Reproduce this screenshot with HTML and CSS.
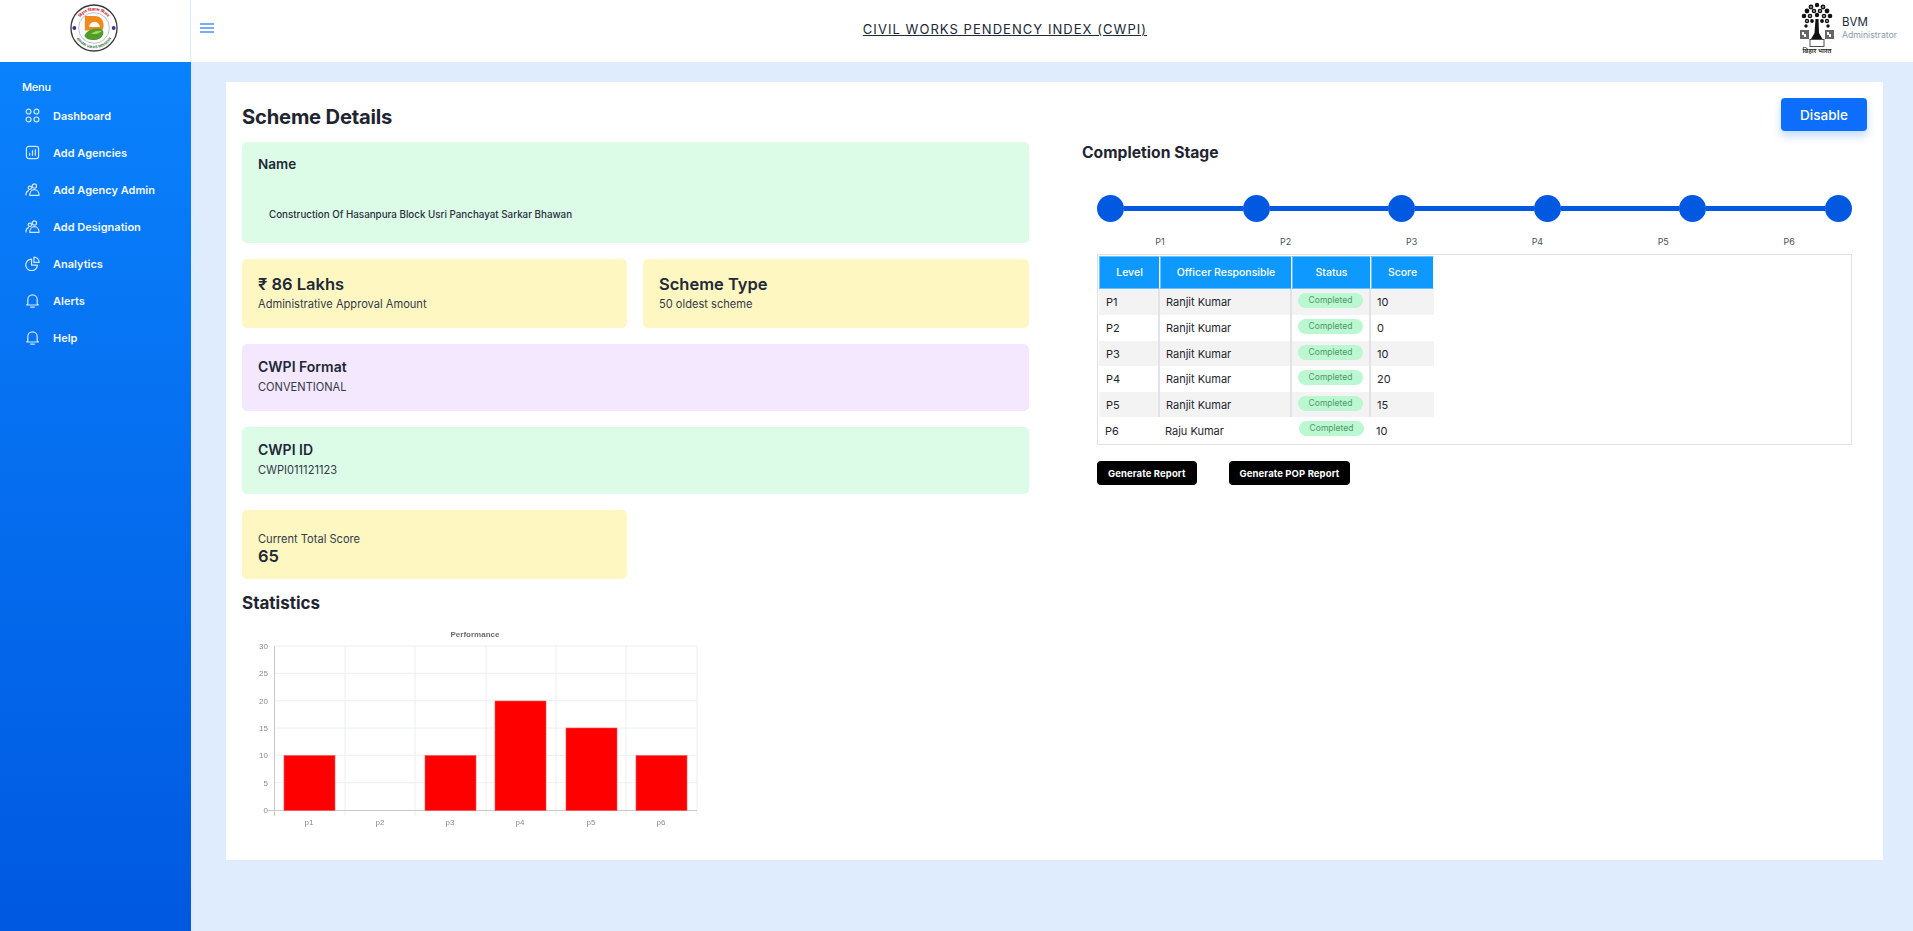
FILE: index.html
```html
<!DOCTYPE html>
<html lang="en">
<head>
<meta charset="utf-8">
<title>Scheme Details</title>
<link rel="stylesheet" href="styles.css">
</head>
<body>
<div class="app">
  <aside class="sidebar">
    <div class="brand">
      <svg class="logo" viewBox="0 0 50 50" width="48" height="48">
        <defs>
          <path id="arcTop" d="M7 25a18 18 0 0 1 36 0"/>
          <path id="arcBot" d="M3.800 25a21.200 21.200 0 0 0 42.400 0"/>
        </defs>
        <circle cx="25" cy="25" r="24" fill="#fff" stroke="#3a3a3a" stroke-width="1.400"/>
        <circle cx="25" cy="25" r="16" fill="#fff" stroke="#8d8bc9" stroke-width=".6"/>
        <text class="logo-top"><textPath href="#arcTop" startOffset="50%" text-anchor="middle">बिहार विकास मिशन</textPath></text>
        <text class="logo-bot"><textPath href="#arcBot" startOffset="50%" text-anchor="middle">BIHAR VIKAS MISSION</textPath></text>
        <circle cx="4.500" cy="25" r="2" fill="#3d2f92"/>
        <circle cx="45.500" cy="25" r="2" fill="#3d2f92"/>
        <path d="M15.500 12.500h10c7 0 9.500 5 9.500 10 0 2-.5 3.500-1.500 5H15.500z" fill="#f08a1d"/>
        <path d="M20 24a5.500 5.500 0 0 1 11 0z" fill="#fff"/>
        <path d="M15 33c2-5 8-8 15-7.500 4 .5 5.500 3 4.500 6-1 4-5 6-10 6-4.500 0-8-1-9.500-4.500z" fill="#4f9e2a"/>
        <path d="M22 31c3-2.500 7-3.500 11-3-2 2.500-7 4-11 3z" fill="#a6d468"/>
      </svg>
    </div>
    <nav class="nav">
      <div class="nav-label">Menu</div>
      <a class="nav-item"><svg class="nav-icon" viewBox="0 0 16 16"><circle cx="3.800" cy="3.800" r="2.600"/><circle cx="12.200" cy="3.800" r="2.600"/><circle cx="3.800" cy="12.200" r="2.600"/><circle cx="12.200" cy="12.200" r="2.600"/></svg>Dashboard</a>
      <a class="nav-item"><svg class="nav-icon" viewBox="0 0 16 16"><rect x="1.500" y="1.500" width="13" height="13" rx="2.500"/><path d="M5 11V9M8 11V6M11 11V5"/></svg>Add Agencies</a>
      <a class="nav-item"><svg class="nav-icon" viewBox="0 0 16 16"><circle cx="10" cy="4.200" r="2.300"/><circle cx="5.200" cy="6.200" r="1.800"/><path d="M5 14.200h10c0-3.500-2.200-6-5-6s-5 2.500-5 6zM1 13.800c0-2.500 1-4 2.600-4.600"/></svg>Add Agency Admin</a>
      <a class="nav-item"><svg class="nav-icon" viewBox="0 0 16 16"><circle cx="10" cy="4.200" r="2.300"/><circle cx="5.200" cy="6.200" r="1.800"/><path d="M5 14.200h10c0-3.500-2.200-6-5-6s-5 2.500-5 6zM1 13.800c0-2.500 1-4 2.600-4.600"/></svg>Add Designation</a>
      <a class="nav-item"><svg class="nav-icon" viewBox="0 0 16 16"><path d="M7 3.300a6.200 6.200 0 1 0 6.200 6.500H7z"/><path d="M9.500 1.200v5.600h5.600a5.600 5.600 0 0 0-5.600-5.600z"/></svg>Analytics</a>
      <a class="nav-item"><svg class="nav-icon" viewBox="0 0 16 16"><path d="M3 11.800V7a5 5 0 0 1 10 0v4.800l1.200 1H1.800z"/><path d="M6 15h4"/></svg>Alerts</a>
      <a class="nav-item"><svg class="nav-icon" viewBox="0 0 16 16"><path d="M3 11.800V7a5 5 0 0 1 10 0v4.800l1.200 1H1.800z"/><path d="M6 15h4"/></svg>Help</a>
    </nav>
  </aside>
  <div class="content">
    <header class="topbar">
      <svg class="burger" viewBox="0 0 14 10" width="14" height="10"><path d="M0 1h14M0 5h14M0 9h14"/></svg>
      <h1 class="page-title">CIVIL WORKS PENDENCY INDEX (CWPI)</h1>
      <div class="user">
        <svg class="emblem" viewBox="0 0 36 52" width="36" height="52">
          <g fill="#111">
            <circle cx="18" cy="3" r="2.200"/><circle cx="12" cy="5" r="2.400"/><circle cx="24" cy="5" r="2.400"/>
            <circle cx="8" cy="9" r="2.400"/><circle cx="15" cy="9" r="2.300"/><circle cx="21" cy="9" r="2.300"/><circle cx="28" cy="9" r="2.400"/>
            <circle cx="5" cy="14" r="2.300"/><circle cx="11" cy="14" r="2.300"/><circle cx="18" cy="13" r="2.200"/><circle cx="25" cy="14" r="2.300"/><circle cx="31" cy="14" r="2.300"/>
            <circle cx="8" cy="19" r="2.200"/><circle cx="13" cy="19" r="1.900"/><circle cx="23" cy="19" r="1.900"/><circle cx="28" cy="19" r="2.200"/>
            <circle cx="7" cy="24" r="1.700"/><circle cx="29" cy="24" r="1.700"/>
            <path d="M16.500 17h3l.5 14 3.500 6h-11.500l3.500-6z"/>
            <rect x="1" y="28" width="9" height="9" fill="#666"/><rect x="26" y="28" width="9" height="9" fill="#666"/>
          </g>
          <g fill="#fff">
            <circle cx="12" cy="5" r=".8"/><circle cx="24" cy="5" r=".8"/><circle cx="15" cy="9" r=".8"/><circle cx="21" cy="9" r=".8"/><circle cx="11" cy="14" r=".8"/><circle cx="25" cy="14" r=".8"/><circle cx="8" cy="19" r=".8"/><circle cx="28" cy="19" r=".8"/>
            <path d="M3 30h2v2h2v3H5v-2H3zM28 30h2v2h2v3h-2v-2h-2z"/>
            <rect x="11" y="37.500" width="14" height="7" stroke="#222" stroke-width=".8"/>
          </g>
          <text class="emblem-text" x="18" y="51" text-anchor="middle">बिहार भारत</text>
        </svg>
        <div class="user-text">
          <div class="user-name">BVM</div>
          <div class="user-role">Administrator</div>
        </div>
      </div>
    </header>
    <main class="main">
      <section class="card">
        <div class="col-left">
          <h2 class="h-page">Scheme Details</h2>
          <div class="tile tile-green tile-name">
            <h3 class="tile-h-sm">Name</h3>
            <p class="name-val">Construction Of Hasanpura Block Usri Panchayat Sarkar Bhawan</p>
          </div>
          <div class="tile-row">
            <div class="tile tile-yellow tile-half">
              <h3 class="tile-h">₹ 86 Lakhs</h3>
              <p class="tile-p">Administrative Approval Amount</p>
            </div>
            <div class="tile tile-yellow tile-half">
              <h3 class="tile-h">Scheme Type</h3>
              <p class="tile-p">50 oldest scheme</p>
            </div>
          </div>
          <div class="tile tile-purple">
            <h3 class="tile-h-md">CWPI Format</h3>
            <p class="tile-p tile-p-gap">CONVENTIONAL</p>
          </div>
          <div class="tile tile-green">
            <h3 class="tile-h-md">CWPI ID</h3>
            <p class="tile-p tile-p-gap">CWPI011121123</p>
          </div>
          <div class="tile tile-yellow tile-score">
            <p class="tile-p">Current Total Score</p>
            <h3 class="tile-h">65</h3>
          </div>
          <h2 class="h-sec stat-h">Statistics</h2>
          <svg class="chart" viewBox="0 0 480 220" width="480" height="220">
            <g class="grid">
              <path d="M44 27h423M44 54.300h423M44 81.700h423M44 109h423M44 136.300h423M44 163.700h423"/>
              <path d="M115 27v170M185 27v170M256 27v170M326 27v170M396 27v170M467 27v170"/>
            </g>
            <g class="axis"><path d="M44.500 27v170M38 191.500h429"/></g>
            <g class="bars">
              <rect x="54" y="136.500" width="51" height="55"/>
              <rect x="195" y="136.500" width="51" height="55"/>
              <rect x="265" y="82" width="51" height="109.500"/>
              <rect x="336" y="109" width="51" height="82.500"/>
              <rect x="406" y="136.500" width="51" height="55"/>
            </g>
            <text class="c-title" x="245" y="18" text-anchor="middle">Performance</text>
            <g class="c-y" text-anchor="end">
              <text x="38" y="30">30</text><text x="38" y="57">25</text><text x="38" y="85">20</text><text x="38" y="112">15</text><text x="38" y="139">10</text><text x="38" y="167">5</text><text x="38" y="194">0</text>
            </g>
            <g class="c-x" text-anchor="middle">
              <text x="79" y="206">p1</text><text x="150" y="206">p2</text><text x="220" y="206">p3</text><text x="290" y="206">p4</text><text x="361" y="206">p5</text><text x="431" y="206">p6</text>
            </g>
          </svg>
        </div>
        <div class="col-right">
          <div class="action-row"><button class="btn-primary">Disable</button></div>
          <h2 class="h-sec stage-h">Completion Stage</h2>
          <div class="stepper">
            <span class="dot"></span><span class="bar"></span><span class="dot"></span><span class="bar"></span><span class="dot"></span><span class="bar"></span><span class="dot"></span><span class="bar"></span><span class="dot"></span><span class="bar"></span><span class="dot"></span>
          </div>
          <div class="step-labels"><span>P1</span><span>P2</span><span>P3</span><span>P4</span><span>P5</span><span>P6</span></div>
          <div class="table-box">
            <table class="tbl">
              <thead><tr><th class="c1">Level</th><th class="c2">Officer Responsible</th><th class="c3">Status</th><th class="c4">Score</th></tr></thead>
              <tbody>
                <tr><td>P1</td><td>Ranjit Kumar</td><td><span class="pill">Completed</span></td><td>10</td></tr>
                <tr><td>P2</td><td>Ranjit Kumar</td><td><span class="pill">Completed</span></td><td>0</td></tr>
                <tr class="short"><td>P3</td><td>Ranjit Kumar</td><td><span class="pill">Completed</span></td><td>10</td></tr>
                <tr><td>P4</td><td>Ranjit Kumar</td><td><span class="pill">Completed</span></td><td>20</td></tr>
                <tr class="short"><td>P5</td><td>Ranjit Kumar</td><td><span class="pill">Completed</span></td><td>15</td></tr>
                <tr class="last"><td>P6</td><td>Raju Kumar</td><td><span class="pill">Completed</span></td><td>10</td></tr>
              </tbody>
            </table>
          </div>
          <div class="report-btns">
            <button class="btn-black">Generate Report</button>
            <button class="btn-black">Generate POP Report</button>
          </div>
        </div>
      </section>
    </main>
  </div>
</div>
</body>
</html>
```

FILE: styles.css
```css
* { box-sizing: border-box; }
html, body { margin: 0; height: 100%; }
body {
  font-family: "Inter", "Noto Sans", "Liberation Sans", sans-serif;
  color: #212837;
  background: #deecfe;
  overflow: hidden;
}
h1, h2, h3, p { margin: 0; }
.app { display: flex; height: 931px; }

.sidebar {
  width: 191px;
  flex: none;
  display: flex;
  flex-direction: column;
  background: linear-gradient(180deg, #0a84ff 0%, #0059e0 100%);
}
.brand {
  height: 62px;
  background: #fff;
  border-right: 1px solid #deecfe;
  display: flex;
  align-items: center;
  justify-content: center;
  padding: 0 2px 6px 0;
}
.logo-top { font: 700 4.200px "Noto Sans", sans-serif; fill: #c8242b; }
.logo-bot { font: 700 3.900px "Liberation Sans", sans-serif; fill: #1c6b2f; }
.nav { padding: 18px 0 0 22px; }
.nav-label { font-size: 11px; font-weight: 500; color: #fff; line-height: 14px; margin-bottom: 3px; letter-spacing: -.2px; }
.nav-item {
  display: flex;
  align-items: center;
  gap: 13px;
  height: 37px;
  padding-left: 3px;
  font-size: 11px;
  font-weight: 600;
  color: #f2f7ff;
}
.nav-icon {
  width: 15px;
  height: 15px;
  flex: none;
  fill: none;
  stroke: #d6e6ff;
  stroke-width: 1.300;
  stroke-linejoin: round;
  stroke-linecap: round;
}

.content { flex: 1; min-width: 0; display: flex; flex-direction: column; }
.topbar {
  height: 62px;
  background: #fff;
  display: flex;
  align-items: center;
  padding: 0 16px 6px 9px;
}
.burger { stroke: #4d90f5; stroke-width: 1.500; fill: none; flex: none; }
.page-title {
  flex: 1;
  text-align: center;
  font-size: 13px;
  font-weight: 400;
  letter-spacing: 1.050px;
  color: #212837;
  text-decoration: underline;
  padding: 2px 31px 0 28px;
}
.user { display: flex; align-items: center; gap: 7px; }
.emblem-text { font: 600 6.500px "Noto Sans", sans-serif; fill: #222; }
.user-name { font-size: 11.500px; line-height: 14px; color: #212837; }
.user-role { font-size: 8.700px; line-height: 12px; color: #8b97ad; }

.main { flex: 1; padding: 20px 30px 0 35px; }
.card {
  background: #fff;
  height: 778px;
  padding: 16px;
  display: grid;
  grid-template-columns: 787px 1fr;
  column-gap: 53px;
}
.h-page { font-size: 20.200px; font-weight: 700; line-height: 26px; height: 44px; padding-top: 6px; color: #1f2530; letter-spacing: -.2px; }
.h-sec { font-size: 16px; font-weight: 700; color: #1f2530; line-height: 20px; }

.tile { border-radius: 5px; padding: 14px 16px; margin-bottom: 16px; height: 67px; }
.tile-green { background: #dcfce7; }
.tile-yellow { background: #fef7c2; }
.tile-purple { background: #f3e8ff; }
.tile-name { height: 101px; padding-top: 13px; }
.tile-row { display: grid; grid-template-columns: 385px 386px; column-gap: 16px; }
.tile-half { height: 69px; }
.tile-score { width: 385px; height: 69px; padding-top: 20px; margin-bottom: 0; }
.tile-h-sm { font-size: 13.500px; font-weight: 600; line-height: 18px; }
.tile-h { font-size: 16.500px; font-weight: 600; line-height: 23px; }
.tile-h-md { font-size: 14px; font-weight: 600; line-height: 18px; }
.tile-p { font-size: 11.100px; line-height: 16px; color: #333a4a; }
.tile-p-gap { margin-top: 3px; }
.tile-score .tile-h { line-height: 19px; }
.tile-score .tile-p { padding-top: 1px; }
.name-val { font-size: 9.800px; font-weight: 500; margin: 35px 0 0 11px; line-height: 14px; color: #2a3040; }

.stat-h { margin-top: 14px; height: 26px; font-size: 17px; }
.chart { display: block; margin: 0 0 0 -12px; filter: blur(.35px); }
.grid path { stroke: #eceef1; stroke-width: 1; fill: none; }
.axis path { stroke: #c9c9c9; stroke-width: 1; fill: none; }
.bars rect { fill: #ff0000; stroke: #ff5050; stroke-width: .6; }
.c-title { font: 700 8px "Liberation Sans", sans-serif; fill: #6b6b6b; }
.c-y text, .c-x text { font: 8px "Liberation Sans", sans-serif; fill: #8a8a8a; }

.action-row { display: flex; justify-content: flex-end; height: 33px; }
.btn-primary {
  width: 86px;
  height: 33px;
  border: 0;
  border-radius: 4px;
  background: #0d6efd;
  color: #fff;
  font: 500 13.500px "Inter", sans-serif;
  box-shadow: 0 5px 8px rgba(13, 110, 253, .25);
}
.stage-h { margin-top: 12px; height: 52px; font-size: 15.700px; }
.stepper { display: flex; align-items: center; margin: 0 0 0 15px; width: 755px; height: 27px; }
.dot { width: 27px; height: 27px; flex: none; border-radius: 50%; background: #0059e0; }
.bar { flex: 1; height: 5px; background: #0059e0; }
.step-labels {
  display: grid;
  grid-template-columns: repeat(6, 1fr);
  margin-left: 15px;
  width: 755px;
  height: 32px;
  padding-top: 14px;
  text-align: center;
  font-size: 9px;
  line-height: 12px;
  color: #4a5160;
}
.table-box { margin-left: 15px; width: 755px; height: 191px; border: 1px solid #dfe1e8; padding: 1px; }
.tbl { border-collapse: separate; border-spacing: 0; table-layout: fixed; width: 335px; font-size: 11px; }
.c1 { width: 61px; } .c2 { width: 132px; } .c3 { width: 79px; } .c4 { width: 63px; }
.tbl th {
  background: #0d99ff;
  color: #fff;
  font-weight: 500;
  font-size: 10.500px;
  height: 33px;
  border: 1px solid #6cc1ff;
  border-right: 1px solid #fff;
  padding: 0;
}
.tbl td {
  height: 26px;
  padding: 0 0 0 6px;
  border-right: 2px solid #e2e3e6;
  color: #1f2530;
  vertical-align: middle;
}
.tbl td:first-child { padding-left: 7px; }
.tbl .short td { height: 25px; }
.tbl tbody tr:nth-child(odd) td { background: #f3f3f3; }
.tbl td:nth-child(3) { padding: 0; text-align: center; vertical-align: top; }
.tbl td:last-child { border-right: 0; }
.tbl .last td { border-right: 0; padding-left: 5px; height: 27px; background: #fff; }
.tbl .last td:first-child { padding-left: 6px; }
.tbl .last td:nth-child(3) { padding-left: 0; }
.pill {
  display: block;
  width: 65px;
  height: 15px;
  margin: 4px auto 0;
  border-radius: 8px;
  background: #bbf7d0;
  color: #4d9a68;
  font-size: 8.500px;
  line-height: 14px;
}
.report-btns { display: flex; gap: 32px; margin: 16px 0 0 15px; }
.btn-black {
  height: 24px;
  padding: 0 11px;
  border: 0;
  border-radius: 4px;
  background: #000;
  color: #fff;
  font: 700 9.500px "Inter", sans-serif;
  letter-spacing: .1px;
}
```
